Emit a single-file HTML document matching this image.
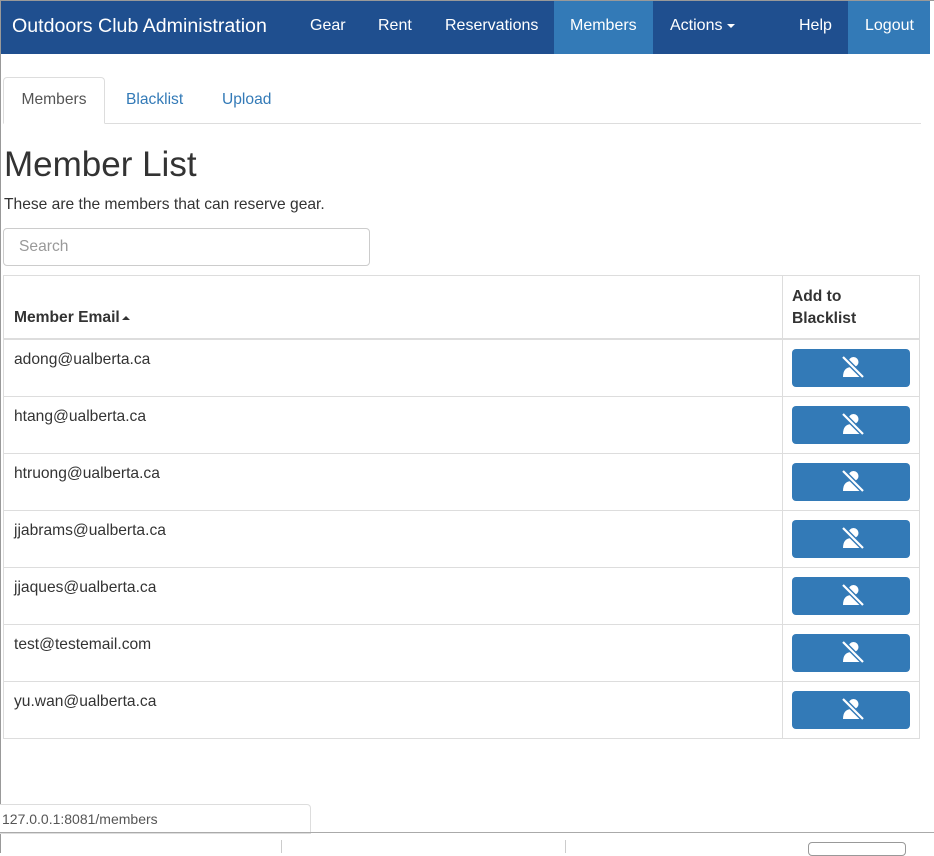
<!DOCTYPE html>
<html><head><meta charset="utf-8"><style>
*{box-sizing:border-box;margin:0;padding:0}
body{width:934px;height:853px;background:#fff;font-family:"Liberation Sans",Arial,sans-serif;color:#333;position:relative;overflow:hidden;font-size:15.6px}
.a{position:absolute}
.nav{left:1px;top:1px;width:929px;height:53px;background:#1f4f8f}
.ni{top:1px;height:53px;line-height:50px;color:#fff;font-size:16px;padding:0 16px}
.btn{left:792px;width:118px;height:38px;background:#337ab7;border-radius:4px}
.btn svg{position:absolute;left:49px;top:7px}
.row{left:3px;width:917px;height:57px;border-bottom:1px solid #ddd}
.em{left:14px;font-size:15.6px}
</style></head><body>
<div class="a" style="left:0;top:0;width:1px;height:853px;background:#999"></div>
<div class="a" style="left:0;top:0;width:934px;height:1px;background:#999"></div>
<div class="a nav"></div>
<div class="a ni" style="left:554px;width:99px;background:#337ab7"></div>
<div class="a ni" style="left:848px;width:82px;background:#337ab7"></div>
<div class="a" style="left:12px;top:1px;line-height:50px;color:#fff;font-size:19.6px">Outdoors Club Administration</div>
<div class="a ni" style="left:294px">Gear</div>
<div class="a ni" style="left:362px">Rent</div>
<div class="a ni" style="left:429px">Reservations</div>
<div class="a ni" style="left:554px">Members</div>
<div class="a ni" style="left:654px">Actions <span style="display:inline-block;border-left:4px solid transparent;border-right:4px solid transparent;border-top:4px solid #fff;vertical-align:middle"></span></div>
<div class="a ni" style="left:783px">Help</div>
<div class="a ni" style="left:849px">Logout</div>

<div class="a" style="left:3px;top:123px;width:918px;height:1px;background:#ddd"></div>
<div class="a" style="left:3px;top:77px;width:102px;height:47px;border:1px solid #ddd;border-bottom:1px solid #fff;border-radius:4px 4px 0 0;background:#fff;text-align:center;line-height:44px;color:#555">Members</div>
<div class="a" style="left:126px;top:78px;line-height:44px;color:#337ab7">Blacklist</div>
<div class="a" style="left:222px;top:78px;line-height:44px;color:#337ab7">Upload</div>

<div class="a" style="left:4px;top:145px;font-size:35px;line-height:40px">Member List</div>
<div class="a" style="left:4px;top:196px">These are the members that can reserve gear.</div>
<div class="a" style="left:3px;top:228px;width:367px;height:38px;border:1px solid #ccc;border-radius:4px;padding-left:15px;line-height:36px;color:#999">Search</div>

<div class="a" style="left:3px;top:275px;width:917px;height:464px;border:1px solid #ddd"></div>
<div class="a" style="left:782px;top:275px;width:1px;height:464px;background:#ddd"></div>
<div class="a" style="left:3px;top:338px;width:917px;height:2px;background:#ddd"></div>
<div class="a" style="left:14px;top:309px;font-weight:bold">Member Email<span style="display:inline-block;border-left:4px solid transparent;border-right:4px solid transparent;border-bottom:4px solid #333;vertical-align:middle;margin-left:2px"></span></div>
<div class="a" style="left:792px;top:286px;font-weight:bold;line-height:22px">Add to<br>Blacklist</div>

<div class="a row" style="top:340px"></div><div class="a row" style="top:397px"></div><div class="a row" style="top:454px"></div><div class="a row" style="top:511px"></div><div class="a row" style="top:568px"></div><div class="a row" style="top:625px"></div>

<div class="a em" style="top:351px">adong@ualberta.ca</div>
<div class="a em" style="top:408px">htang@ualberta.ca</div>
<div class="a em" style="top:465px">htruong@ualberta.ca</div>
<div class="a em" style="top:522px">jjabrams@ualberta.ca</div>
<div class="a em" style="top:579px">jjaques@ualberta.ca</div>
<div class="a em" style="top:636px">test@testemail.com</div>
<div class="a em" style="top:693px">yu.wan@ualberta.ca</div>

<svg width="0" height="0" style="position:absolute"><defs><g id="ic"><circle cx="12.5" cy="6" r="5" fill="#fff"/><path d="M2 21 Q2 11 11 11 Q20 11 20 21 Z" fill="#fff"/><path d="M2 1 L22 21" stroke="#337ab7" stroke-width="5"/><path d="M2 1 L22 21" stroke="#fff" stroke-width="2.2"/></g></defs></svg>
<div class="a btn" style="top:349px"><svg width="24" height="22"><use href="#ic"/></svg></div>
<div class="a btn" style="top:406px"><svg width="24" height="22"><use href="#ic"/></svg></div>
<div class="a btn" style="top:463px"><svg width="24" height="22"><use href="#ic"/></svg></div>
<div class="a btn" style="top:520px"><svg width="24" height="22"><use href="#ic"/></svg></div>
<div class="a btn" style="top:577px"><svg width="24" height="22"><use href="#ic"/></svg></div>
<div class="a btn" style="top:634px"><svg width="24" height="22"><use href="#ic"/></svg></div>
<div class="a btn" style="top:691px"><svg width="24" height="22"><use href="#ic"/></svg></div>

<div class="a" style="left:0;top:804px;width:311px;height:30px;border:1px solid #ddd;border-left:none;border-radius:0 4px 0 0;background:#fff;font-size:14px;color:#555;line-height:28px;padding-left:2px">127.0.0.1:8081/members</div>
<div class="a" style="left:0;top:832px;width:934px;height:1px;background:#aaa"></div>
<div class="a" style="left:281px;top:840px;width:1px;height:13px;background:#ccc"></div>
<div class="a" style="left:565px;top:840px;width:1px;height:13px;background:#ccc"></div>
<div class="a" style="left:808px;top:842px;width:98px;height:14px;border:1px solid #999;border-radius:4px"></div>
</body></html>
